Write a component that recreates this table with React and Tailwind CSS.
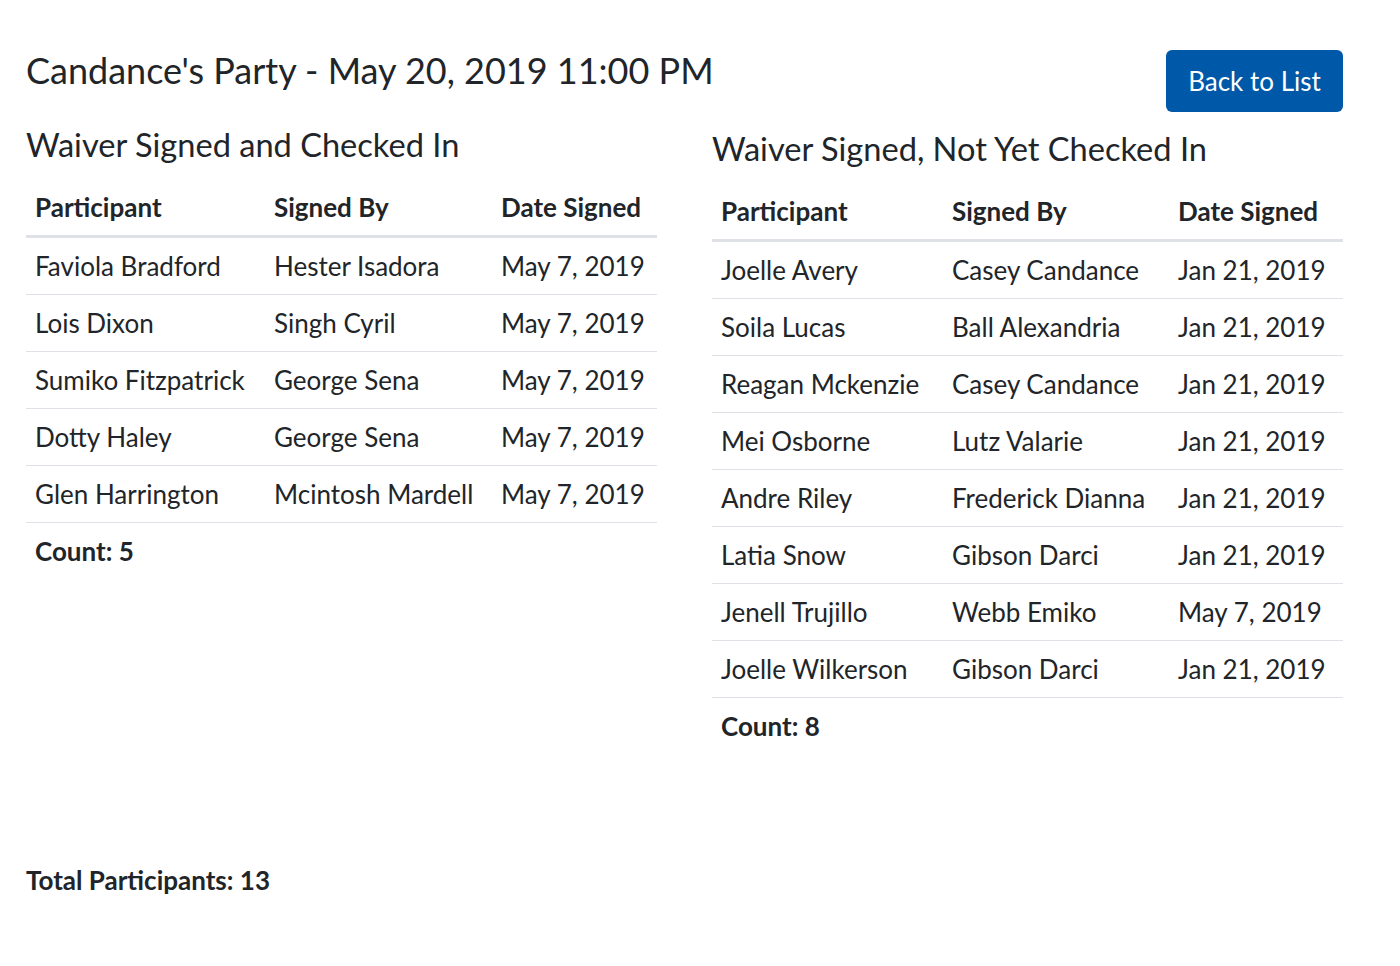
const checkedIn = [
  ['Faviola Bradford', 'Hester Isadora', 'May 7, 2019'],
  ['Lois Dixon', 'Singh Cyril', 'May 7, 2019'],
  ['Sumiko Fitzpatrick', 'George Sena', 'May 7, 2019'],
  ['Dotty Haley', 'George Sena', 'May 7, 2019'],
  ['Glen Harrington', 'Mcintosh Mardell', 'May 7, 2019'],
];

const notCheckedIn = [
  ['Joelle Avery', 'Casey Candance', 'Jan 21, 2019'],
  ['Soila Lucas', 'Ball Alexandria', 'Jan 21, 2019'],
  ['Reagan Mckenzie', 'Casey Candance', 'Jan 21, 2019'],
  ['Mei Osborne', 'Lutz Valarie', 'Jan 21, 2019'],
  ['Andre Riley', 'Frederick Dianna', 'Jan 21, 2019'],
  ['Latia Snow', 'Gibson Darci', 'Jan 21, 2019'],
  ['Jenell Trujillo', 'Webb Emiko', 'May 7, 2019'],
  ['Joelle Wilkerson', 'Gibson Darci', 'Jan 21, 2019'],
];

function WaiverTable({ rows, widths }) {
  return (
    <>
      <table className="w-full table-fixed border-collapse">
        <colgroup>
          {widths.map((w, i) => (
            <col key={i} style={{ width: w }} />
          ))}
        </colgroup>
        <thead>
          <tr>
            {['Participant', 'Signed By', 'Date Signed'].map((h) => (
              <th
                key={h}
                className="text-left font-bold px-[9px] pt-[12px] pb-[11px] leading-[33px] border-b-[3px] border-[#dee2e6] whitespace-nowrap"
              >
                {h}
              </th>
            ))}
          </tr>
        </thead>
        <tbody>
          {rows.map((r, i) => (
            <tr key={i}>
              {r.map((c, j) => (
                <td
                  key={j}
                  className="px-[9px] py-[12px] leading-[32px] border-b border-[#dee2e6] whitespace-nowrap"
                >
                  {c}
                </td>
              ))}
            </tr>
          ))}
        </tbody>
      </table>
      <p className="font-bold px-[9px] mt-[12px] leading-[32px]">Count: {rows.length}</p>
    </>
  );
}

export default function App() {
  return (
    <div
      className="min-h-screen bg-white text-[#212529] px-[26px] pt-[48px] text-[26px]"
      style={{ fontFamily: 'Lato, "Open Sans", sans-serif' }}
    >
      <div className="flex gap-[55px] w-[1317px]">
        {/* left column */}
        <div className="w-[631px]">
          <h1 className="text-[36px] leading-[44px] whitespace-nowrap">
            Candance's Party - May 20, 2019 11:00 PM
          </h1>
          <h2 className="text-[32.6px] leading-[40px] mt-[33px] mb-[14px] whitespace-nowrap">
            Waiver Signed and Checked In
          </h2>
          <WaiverTable rows={checkedIn} widths={[239, 227, 165]} />
        </div>

        {/* right column */}
        <div className="w-[631px]">
          <div className="flex justify-end pt-[2px]">
            <button className="bg-[#0059a8] text-white rounded-[6px] w-[177px] h-[62px] text-[26px]">
              Back to List
            </button>
          </div>
          <h2 className="text-[32.6px] leading-[40px] mt-[17px] mb-[14px] whitespace-nowrap">
            Waiver Signed, Not Yet Checked In
          </h2>
          <WaiverTable rows={notCheckedIn} widths={[231, 226, 174]} />
        </div>
      </div>

      <p className="font-bold mt-[122px] leading-[32px]">Total Participants: 13</p>
    </div>
  );
}
